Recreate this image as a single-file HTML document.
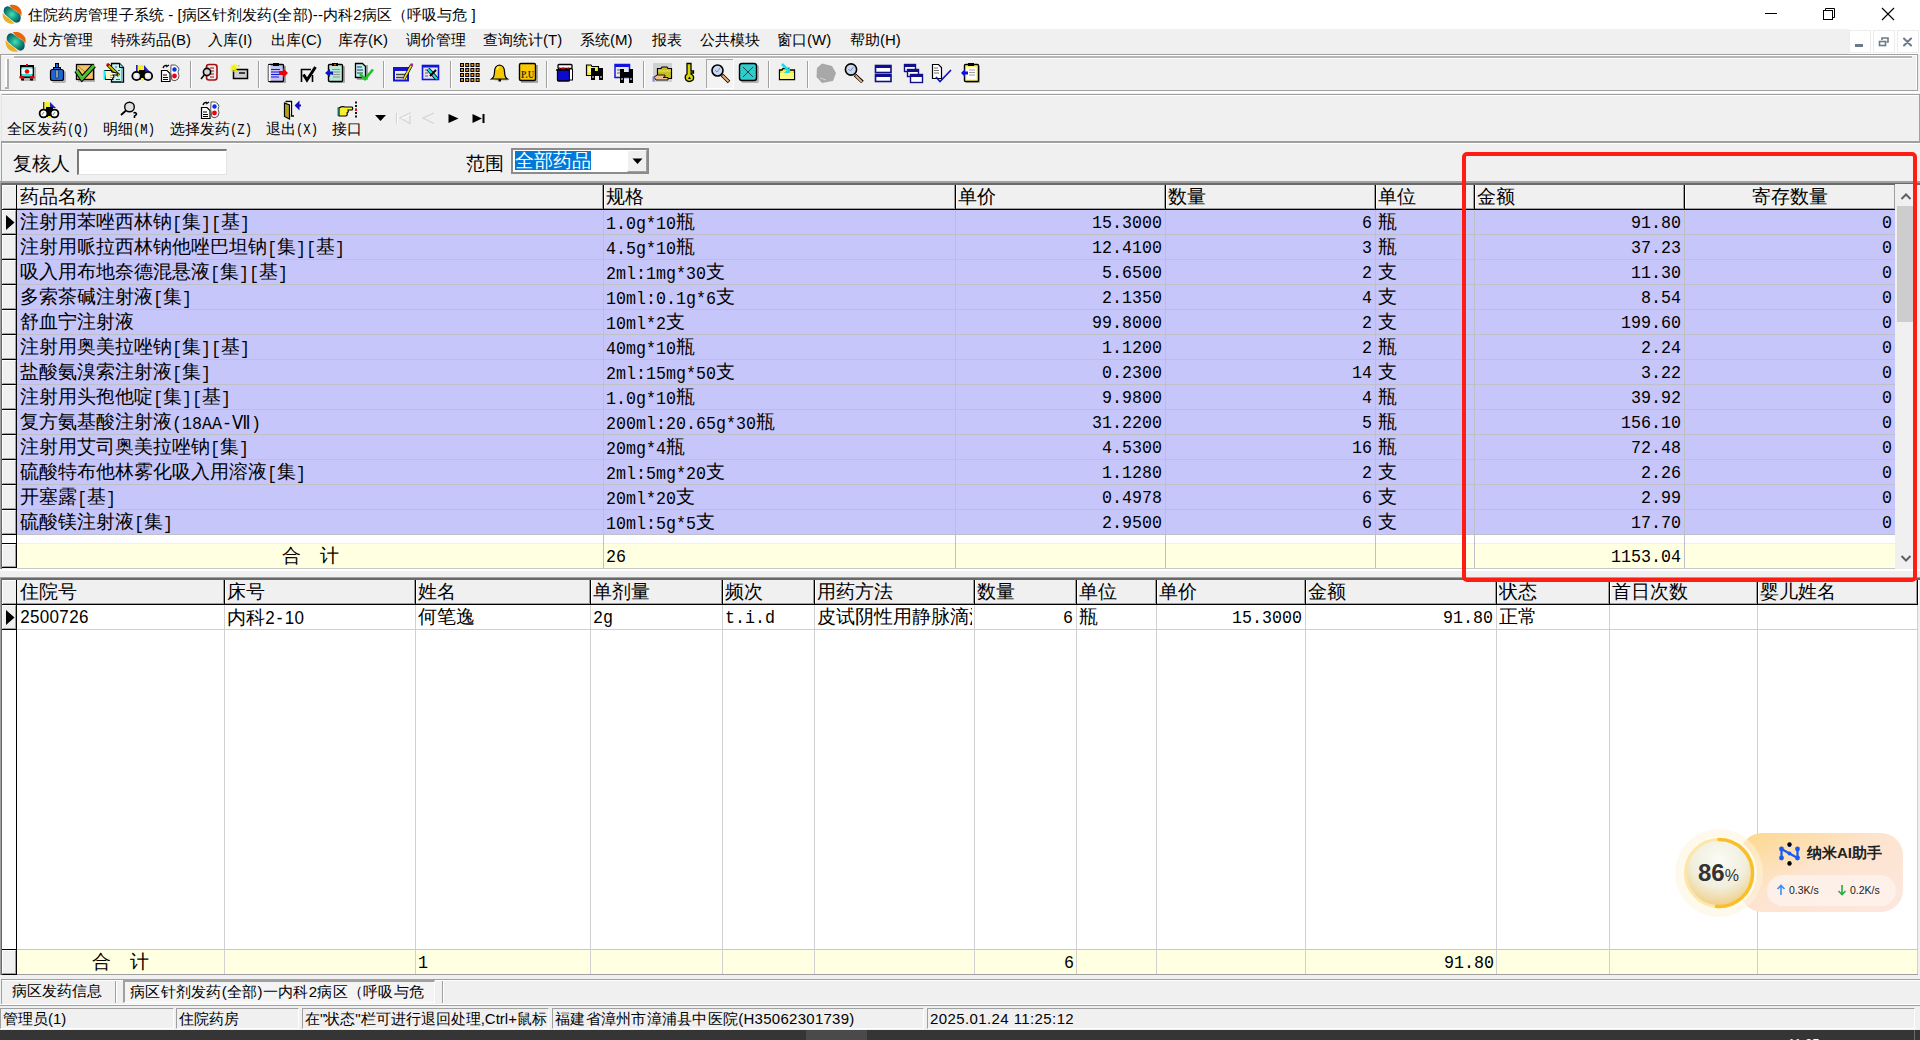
<!DOCTYPE html><html><head><meta charset="utf-8"><title>recreation</title><style>
*{margin:0;padding:0;box-sizing:border-box}
html,body{width:1920px;height:1040px;overflow:hidden;background:#f0f0f0;font-family:'Liberation Sans',sans-serif;color:#000}
.ab{position:absolute}
.c{font-size:18.67px}
.a{font-family:'Liberation Mono',monospace;font-size:16.67px;display:inline-block;transform:scaleY(1.15)}
.tb .c{font-size:14.67px}.tb .a{font-size:12.2px}
.ui{position:absolute;font-family:'Liberation Sans',sans-serif;font-size:15px;white-space:nowrap;line-height:20px}
.cell{position:absolute;white-space:nowrap;overflow:hidden;height:24px;line-height:24px}
.r{text-align:right}
.ind{position:absolute;left:2px;width:14px;background:#f0f0f0;border-top:1px solid #fff;border-left:1px solid #fff;border-right:1px solid #a0a0a0;border-bottom:1px solid #a0a0a0}
</style></head><body>
<div class="ab" style="left:0px;top:0px;width:1920px;height:29px;background:#fff;"></div>
<svg class="ab" style="left:2px;top:4px" width="20" height="20" viewBox="0 0 20 20">
<defs><radialGradient id="lg2" cx="48%" cy="50%" r="55%"><stop offset="0" stop-color="#42e2b4"/><stop offset="0.6" stop-color="#16907e"/><stop offset="1" stop-color="#085a62"/></radialGradient></defs>
<path d="M2 5 C3 2 6 1.5 8 3 C11 5 13 7 16 8.5 C19 10 19.5 14 18 17 C16 19.5 13 19 11 17 C8 15 6 13 3.5 11 C1.5 9 1.2 7 2 5Z" fill="url(#lg2)"/>
<path d="M7.5 1.2 C12 0 17 2 19 6 C19.8 8 19.8 10 19.3 12 C18 9.5 16 8 13 6.5 C11 5.5 9 3.5 7.5 1.2Z" fill="#ea6408"/>
<path d="M0.7 8.5 C2 11 4 12.5 7 14.5 C9 16 11 18 12.5 19.6 C8 20.5 3 18.5 1.2 14 C0.5 12 0.4 10 0.7 8.5Z" fill="#eeb020"/>
</svg>
<div class="ui" style="left:28px;top:5px;letter-spacing:0.1px">住院药房管理子系统 - [病区针剂发药(全部)--内科2病区（呼吸与危 ]</div>
<div class="ab" style="left:1765px;top:13px;width:12px;height:1px;background:#000;"></div>
<svg class="ab" style="left:1822px;top:7px" width="14" height="14" viewBox="0 0 14 14"><rect x="1.5" y="3.5" width="9" height="9" fill="none" stroke="#000"/><path d="M3.5 3.5 V1.5 H12.5 V10.5 H10.5" fill="none" stroke="#000"/></svg>
<svg class="ab" style="left:1881px;top:7px" width="14" height="14" viewBox="0 0 14 14"><path d="M1 1 L13 13 M13 1 L1 13" stroke="#000" stroke-width="1.1"/></svg>
<svg class="ab" style="left:5px;top:31px" width="21" height="21" viewBox="0 0 20 20">
<defs><radialGradient id="lg5" cx="48%" cy="50%" r="55%"><stop offset="0" stop-color="#42e2b4"/><stop offset="0.6" stop-color="#16907e"/><stop offset="1" stop-color="#085a62"/></radialGradient></defs>
<path d="M2 5 C3 2 6 1.5 8 3 C11 5 13 7 16 8.5 C19 10 19.5 14 18 17 C16 19.5 13 19 11 17 C8 15 6 13 3.5 11 C1.5 9 1.2 7 2 5Z" fill="url(#lg5)"/>
<path d="M7.5 1.2 C12 0 17 2 19 6 C19.8 8 19.8 10 19.3 12 C18 9.5 16 8 13 6.5 C11 5.5 9 3.5 7.5 1.2Z" fill="#ea6408"/>
<path d="M0.7 8.5 C2 11 4 12.5 7 14.5 C9 16 11 18 12.5 19.6 C8 20.5 3 18.5 1.2 14 C0.5 12 0.4 10 0.7 8.5Z" fill="#eeb020"/>
</svg>
<div class="ui" style="left:33px;top:30px">处方管理</div>
<div class="ui" style="left:111px;top:30px">特殊药品(B)</div>
<div class="ui" style="left:208px;top:30px">入库(I)</div>
<div class="ui" style="left:271px;top:30px">出库(C)</div>
<div class="ui" style="left:338px;top:30px">库存(K)</div>
<div class="ui" style="left:406px;top:30px">调价管理</div>
<div class="ui" style="left:483px;top:30px">查询统计(T)</div>
<div class="ui" style="left:580px;top:30px">系统(M)</div>
<div class="ui" style="left:652px;top:30px">报表</div>
<div class="ui" style="left:700px;top:30px">公共模块</div>
<div class="ui" style="left:777px;top:30px">窗口(W)</div>
<div class="ui" style="left:850px;top:30px">帮助(H)</div>
<div class="ab" style="left:1849px;top:29px;width:71px;height:25px;background:#fff;"></div>
<div class="ab" style="left:1849px;top:30px;width:22px;height:23px;background:#fff;border:1px solid #ececec"></div>
<div class="ab" style="left:1873px;top:30px;width:22px;height:23px;background:#fff;border:1px solid #ececec"></div>
<div class="ab" style="left:1897px;top:30px;width:22px;height:23px;background:#fff;border:1px solid #ececec"></div>
<div class="ab" style="left:1855px;top:44px;width:8px;height:3px;background:#6a7a88;"></div>
<svg class="ab" style="left:1877px;top:35px" width="14" height="14" viewBox="0 0 14 14"><rect x="2.5" y="6.5" width="6" height="4" fill="none" stroke="#6a7a88" stroke-width="1.6"/><path d="M5 5 V3 H11 V7 H9.5" fill="none" stroke="#6a7a88" stroke-width="1.6"/></svg>
<svg class="ab" style="left:1901px;top:35px" width="14" height="14" viewBox="0 0 14 14"><path d="M3 3.5 L10 10.5 M10 3.5 L3 10.5" stroke="#6a7a88" stroke-width="2" stroke-linecap="round"/></svg>
<div class="ab" style="left:0px;top:54px;width:1918px;height:1px;background:#a0a0a0;"></div>
<div class="ab" style="left:0px;top:54px;width:1px;height:38px;background:#a0a0a0;"></div>
<div class="ab" style="left:1px;top:55px;width:1916px;height:1px;background:#fff;"></div>
<div class="ab" style="left:14px;top:56px;width:1898px;height:2px;background:#b8b8b8;"></div>
<div class="ab" style="left:14px;top:58px;width:1898px;height:1px;background:#fff;"></div>
<div class="ab" style="left:5px;top:59px;width:2px;height:29px;background:#fff;"></div>
<div class="ab" style="left:7px;top:59px;width:2px;height:29px;background:#b0b0b0;"></div>
<div class="ab" style="left:5px;top:87px;width:4px;height:2px;background:#b0b0b0;"></div>
<div class="ab" style="left:0px;top:90px;width:1918px;height:1px;background:#a0a0a0;"></div>
<div class="ab" style="left:0px;top:91px;width:1920px;height:2px;background:#fff;"></div>
<div class="ab" style="left:1917px;top:54px;width:1px;height:37px;background:#a0a0a0;"></div>
<div class="ab" style="left:1916px;top:55px;width:1px;height:35px;background:#fff;"></div>
<div class="ab" style="left:1918px;top:54px;width:2px;height:38px;background:#f0f0f0;"></div>
<svg class="ab" style="left:0;top:0" width="1000" height="145" viewBox="0 0 1000 145"><rect x="190" y="61" width="1" height="27" fill="#a0a0a0"/><rect x="191" y="61" width="1" height="27" fill="#fff"/><rect x="258" y="61" width="1" height="27" fill="#a0a0a0"/><rect x="259" y="61" width="1" height="27" fill="#fff"/><rect x="383" y="61" width="1" height="27" fill="#a0a0a0"/><rect x="384" y="61" width="1" height="27" fill="#fff"/><rect x="450" y="61" width="1" height="27" fill="#a0a0a0"/><rect x="451" y="61" width="1" height="27" fill="#fff"/><rect x="546" y="61" width="1" height="27" fill="#a0a0a0"/><rect x="547" y="61" width="1" height="27" fill="#fff"/><rect x="643" y="61" width="1" height="27" fill="#a0a0a0"/><rect x="644" y="61" width="1" height="27" fill="#fff"/><rect x="768" y="61" width="1" height="27" fill="#a0a0a0"/><rect x="769" y="61" width="1" height="27" fill="#fff"/><rect x="807" y="61" width="1" height="27" fill="#a0a0a0"/><rect x="808" y="61" width="1" height="27" fill="#fff"/><rect x="22" y="67" width="14" height="14" rx="1" fill="#000" opacity="0.25"/>
<rect x="20" y="65" width="14" height="13" fill="#000"/>
<rect x="21.5" y="67" width="11" height="9.5" fill="#20e6e6"/>
<rect x="21.5" y="68.5" width="11" height="5.5" fill="#fff"/>
<circle cx="27" cy="71.5" r="2.3" fill="#f00"/>
<rect x="26" y="64" width="2" height="2" fill="#e00"/>
<rect x="19.5" y="76" width="5" height="2.5" fill="#d00"/><rect x="29.5" y="76" width="5" height="2.5" fill="#d00"/>
<rect x="21" y="78.5" width="3" height="2" fill="#000"/><rect x="30" y="78.5" width="3" height="2" fill="#000"/><rect x="52" y="71" width="14" height="12" rx="2" fill="#000" opacity="0.25"/>
<rect x="55" y="63" width="4" height="6" fill="#000"/><rect x="56" y="64" width="2" height="5" fill="#1e64d2"/>
<rect x="53" y="67" width="8" height="3" fill="#000"/><rect x="54" y="68" width="6" height="2" fill="#1e64d2"/>
<rect x="50.5" y="69.5" width="13" height="11" rx="2" fill="#1e64d2" stroke="#000" stroke-width="1.2"/>
<rect x="56" y="70" width="2" height="8" fill="#c8c8c8" stroke="#000" stroke-width="0.5"/><rect x="78" y="66" width="17" height="16" fill="#000" opacity="0.25"/>
<rect x="76.5" y="64.5" width="17" height="15" fill="#f6c462" stroke="#000" stroke-width="1.3"/>
<path d="M77 65 L85 72 L93 65" fill="none" stroke="#b08030" stroke-width="1"/>
<path d="M76.5 70.5 L82 78.5 L94 65.5" fill="none" stroke="#000" stroke-width="5"/>
<path d="M76.5 70.5 L82 78.5 L94 65.5" fill="none" stroke="#50c030" stroke-width="3"/><path d="M111.5 63.5 H119.5 L123.5 67.5 V82 H111.5Z" fill="#c4f4f4" stroke="#000" stroke-width="1.3"/>
<path d="M119.5 63.5 V67.5 H123.5" fill="#8cc8c8" stroke="#000" stroke-width="1"/>
<rect x="121" y="68" width="2" height="13.5" fill="#80b8b8"/>
<path d="M115 67h2M118 70.5h2M116 79.5h4" stroke="#406060" stroke-width="1.2"/>
<path d="M107.5 64.5 L119 75.5" stroke="#000" stroke-width="3.2"/><path d="M107.5 64.5 L119 75.5" stroke="#c8c000" stroke-width="1.8"/>
<rect x="106.5" y="63.5" width="2.5" height="2.5" fill="#c00"/>
<path d="M104.5 70.5 H110 Q112 70.5 112 72 L117 73 Q118 74.5 116.5 75 H113 L114 76.5 Q114 78 112.5 78 L113 79.5 H105.5 Q104.5 75 104.5 70.5Z" fill="#fff4c8" stroke="#000" stroke-width="1.1"/>
<path d="M110 75.5 H113M110 77.5 H112.5" stroke="#c09060" stroke-width="0.9"/>
<rect x="103.5" y="70.5" width="1.8" height="9" fill="#10f0f0"/><rect x="137.5" y="65" width="6.5" height="6.5" fill="#f8f030"/><rect x="136" y="65" width="1.6" height="6.5" fill="#2020b0"/>
<path d="M144 65 L149.5 71.5 H144Z" fill="#2020b0"/>
<rect x="139" y="70" width="6.5" height="9.5" fill="#000"/><rect x="141" y="78" width="3" height="2.5" fill="#f8f020"/>
<circle cx="136.5" cy="76" r="4.2" fill="#e8e8e8" stroke="#000" stroke-width="1.8"/>
<circle cx="148" cy="76" r="4.2" fill="#e8e8e8" stroke="#000" stroke-width="1.8"/>
<circle cx="136" cy="75.5" r="1.6" fill="#fff"/><circle cx="147.5" cy="75.5" r="1.6" fill="#fff"/><g transform="translate(161,64)">
<path d="M0.5 6.5 H6 L9 9.5 V17.5 H0.5Z" fill="#fff" stroke="#000" stroke-width="1.2"/>
<path d="M2 11h4M2 13.5h5M2 15.5h5" stroke="#000" stroke-width="1"/>
<path d="M2 4 Q3 1 6 1.5 M5 3 L8 1" fill="none" stroke="#000" stroke-width="1.3"/>
<path d="M10 1 Q15 0 17 3 Q19 5 17 8 Q19 12 17 15 Q14 18 11 16 Q9 9 10 1Z" fill="#fff" stroke="#555" stroke-width="1"/>
<circle cx="13.5" cy="5.5" r="2.2" fill="#0030f0"/><circle cx="13.5" cy="12" r="2.4" fill="#f00010"/>
</g><rect x="206.5" y="64.5" width="10.5" height="15.5" rx="2.5" fill="#f0e8e8" stroke="#a01010" stroke-width="1.6"/>
<path d="M210 68h4M210 71h4M210 74h4M210 77h4" stroke="#a01010" stroke-width="1"/>
<circle cx="207" cy="72" r="3.6" fill="#d8d8d8" stroke="#000" stroke-width="1.6"/>
<path d="M204.5 74.5 L201 79" stroke="#000" stroke-width="1.5"/><rect x="233.5" y="69.5" width="14" height="9" fill="#cfcfcf" stroke="#000" stroke-width="1.5"/>
<path d="M239 73h6" stroke="#000" stroke-width="1.4"/>
<path d="M234 64 V72 M230 68 H238 M231 65 L237 71 M237 65 L231 71" stroke="#f0f000" stroke-width="1.2"/>
<rect x="238" y="65" width="1.5" height="1.5" fill="#cc0"/><rect x="270" y="66" width="16" height="17" fill="#000" opacity="0.3"/>
<rect x="268.5" y="64.5" width="15" height="17" rx="1" fill="#c4c4f4" stroke="#000" stroke-width="1.4"/>
<rect x="268.5" y="65" width="2" height="16" fill="#fff"/>
<rect x="273" y="63" width="6" height="3" fill="#000"/>
<path d="M271 69.5h9M271 72h8M271 74.5h9M271 77h8" stroke="#1a1ad0" stroke-width="1.2"/>
<path d="M279 71 H283 V68 L288 73 L283 78 V75 H279Z" fill="#f00000"/><path d="M301.5 82 V69.5 H311" fill="none" stroke="#000" stroke-width="1.6"/>
<path d="M312.5 75 V82" stroke="#000" stroke-width="1.6"/>
<path d="M303.5 74.5 L307 80 L315.5 67" fill="none" stroke="#000" stroke-width="3"/><rect x="330" y="66" width="15" height="17" rx="1" fill="#000" opacity="0.3"/>
<rect x="328.5" y="64.5" width="14" height="17" rx="1" fill="#b8ead6" stroke="#000" stroke-width="1.4"/>
<rect x="332" y="63" width="6" height="3" fill="#000"/><rect x="334" y="64" width="2" height="1.5" fill="#d04010"/>
<path d="M332 69.5h8M333 72h7M332 74.5h8M333 77h7" stroke="#909090" stroke-width="1"/>
<path d="M333 71.5 H330 V69 L325 73 L330 77 V74.5 H333Z" fill="#1010d0"/><rect x="357" y="65" width="11" height="15" fill="#000" opacity="0.3"/>
<path d="M355.5 63.5 H362.5 L365.5 66.5 V77.5 H355.5Z" fill="#c4f0f8" stroke="#000" stroke-width="1.3"/>
<path d="M357 67h5M357 70h6M357 73h6" stroke="#204040" stroke-width="1"/>
<path d="M360 74 L365 79 L373 69.5" fill="none" stroke="#18c818" stroke-width="2.6"/><rect x="394" y="68" width="14" height="12.5" fill="#f0f0f0" stroke="#1414d0" stroke-width="2"/>
<rect x="394" y="68" width="14" height="3" fill="#1414d0"/>
<path d="M396 74.5h10M396 77.5h10" stroke="#404040" stroke-width="1.5"/>
<path d="M404 79 L411.5 65" stroke="#000" stroke-width="3"/><path d="M404 79 L411.5 65" stroke="#f0e020" stroke-width="1.6"/>
<rect x="410.5" y="63.5" width="2.5" height="2.5" fill="#c010c0"/><rect x="422.5" y="65.5" width="16" height="14" fill="#e4e4f0" stroke="#1414e0" stroke-width="1.6"/>
<rect x="423" y="66" width="15" height="1.5" fill="#1414e0"/>
<path d="M425 70h3M425 73h3M425 76h3" stroke="#606060" stroke-width="1"/>
<path d="M428 69 L437 79" stroke="#000" stroke-width="4"/><path d="M428 69 L437 79" stroke="#10e0e0" stroke-width="2.4"/>
<path d="M430 76 L436 70" stroke="#000" stroke-width="2"/><rect x="460.0" y="63" width="4" height="4" fill="#000"/><rect x="461.0" y="64" width="2" height="2" fill="#e08a10"/><rect x="465.2" y="63" width="4" height="4" fill="#000"/><rect x="466.2" y="64" width="2" height="2" fill="#e08a10"/><rect x="470.4" y="63" width="4" height="4" fill="#000"/><rect x="471.4" y="64" width="2" height="2" fill="#e08a10"/><rect x="475.6" y="63" width="4" height="4" fill="#000"/><rect x="476.6" y="64" width="2" height="2" fill="#e08a10"/><rect x="460.0" y="68" width="4" height="4" fill="#000"/><rect x="461.0" y="69" width="2" height="2" fill="#e08a10"/><rect x="465.2" y="68" width="4" height="4" fill="#000"/><rect x="466.2" y="69" width="2" height="2" fill="#e08a10"/><rect x="470.4" y="68" width="4" height="4" fill="#000"/><rect x="471.4" y="69" width="2" height="2" fill="#e08a10"/><rect x="475.6" y="68" width="4" height="4" fill="#000"/><rect x="476.6" y="69" width="2" height="2" fill="#e08a10"/><rect x="460.0" y="73" width="4" height="4" fill="#000"/><rect x="461.0" y="74" width="2" height="2" fill="#e08a10"/><rect x="465.2" y="73" width="4" height="4" fill="#000"/><rect x="466.2" y="74" width="2" height="2" fill="#e08a10"/><rect x="470.4" y="73" width="4" height="4" fill="#000"/><rect x="471.4" y="74" width="2" height="2" fill="#e08a10"/><rect x="475.6" y="73" width="4" height="4" fill="#000"/><rect x="476.6" y="74" width="2" height="2" fill="#e08a10"/><rect x="460.0" y="78" width="4" height="4" fill="#000"/><rect x="461.0" y="79" width="2" height="2" fill="#e08a10"/><rect x="465.2" y="78" width="4" height="4" fill="#000"/><rect x="466.2" y="79" width="2" height="2" fill="#e08a10"/><rect x="470.4" y="78" width="4" height="4" fill="#000"/><rect x="471.4" y="79" width="2" height="2" fill="#e08a10"/><rect x="475.6" y="78" width="4" height="4" fill="#000"/><rect x="476.6" y="79" width="2" height="2" fill="#e08a10"/><path d="M493 79 Q496 77 496 72 Q496 66 500 65.5 Q504 66 504 72 Q504 77 507 79Z" fill="#000" opacity="0.25" transform="translate(1.5,1.5)"/>
<path d="M491.5 79 Q494.5 77 494.5 72 Q494.5 65.5 499.5 65 Q504.5 65.5 504.5 72 Q504.5 77 507.5 79Z" fill="#f4c800" stroke="#000" stroke-width="1.2"/>
<path d="M497 70 Q497.5 67 499.5 67" stroke="#fff6a0" stroke-width="1.2" fill="none"/>
<rect x="498.5" y="79" width="2.5" height="2.5" fill="#000"/><rect x="521" y="65" width="17" height="18" fill="#000" opacity="0.3"/>
<rect x="519.5" y="63.5" width="16" height="17" rx="1.5" fill="#f8c800" stroke="#000" stroke-width="1.4"/>
<text x="521" y="77.5" font-family="Liberation Serif" font-size="11" font-weight="bold" fill="#403000" textLength="13" lengthAdjust="spacingAndGlyphs">P.U</text><rect x="558" y="64.5" width="14" height="4" rx="1" fill="#fff" stroke="#000" stroke-width="1.3"/>
<path d="M559 67 L561 69 L563 67 L566 69 L569 67 V70 H559Z" fill="#f01010"/>
<rect x="557.5" y="69.5" width="12" height="11.5" rx="1" fill="#0a0ad0" stroke="#000" stroke-width="1.3"/>
<path d="M556 70 H571" stroke="#000" stroke-width="1.4"/>
<rect x="569.5" y="69" width="3" height="11" fill="#fff" stroke="#000" stroke-width="1"/><path d="M586.5 65 H591 L592 66.5 H598.5 V75.5 H586.5Z" fill="#f0f040" stroke="#000" stroke-width="1.2"/>
<rect x="588" y="67" width="4" height="5" fill="#fff8a0"/>
<rect x="591" y="68" width="4" height="12" fill="#000"/><rect x="599" y="68" width="4" height="12" fill="#000"/>
<rect x="593" y="71" width="8" height="4" fill="#000"/>
<rect x="592" y="76" width="2" height="2" fill="#888"/><rect x="600" y="76" width="2" height="2" fill="#888"/><rect x="615" y="64.5" width="14.5" height="13" fill="#e8e8f0" stroke="#1414e0" stroke-width="1.5"/>
<rect x="615" y="64.5" width="14.5" height="2.5" fill="#1414e0"/>
<path d="M617 70h3M621 70h3M617 73h3" stroke="#606060" stroke-width="1"/>
<rect x="620" y="69" width="4" height="14" fill="#000"/><rect x="629" y="69" width="4" height="14" fill="#000"/>
<rect x="622" y="72" width="9" height="5" fill="#000"/>
<rect x="621" y="78" width="2" height="2" fill="#888"/><rect x="630" y="78" width="2" height="2" fill="#888"/><rect x="653" y="63" width="19" height="19" fill="#d0d0d0"/>
<path d="M657.5 68.5 H661 L662 67 H667 L668 68.5 H671.5 V78.5 H657.5Z" fill="#c8c020" stroke="#000" stroke-width="1.2"/>
<path d="M658 71 H671" stroke="#e8e070" stroke-width="1"/>
<path d="M654 77 Q657 74 661 75 H665 Q666 77 663 77.5 H668 V80 H656Z" fill="#f0c090" stroke="#000" stroke-width="0.9"/>
<rect x="652.5" y="76.5" width="2" height="5" fill="#8080d0"/><path d="M687 63.5 H691 V71 H693.5 V73 H691 V74 Q695 76 693 80 Q689 83 686 80 Q684 76 687 74Z" fill="#d8d800" stroke="#000" stroke-width="1.3"/>
<path d="M689.5 76.5 L688 79 H691Z" fill="#000"/><rect x="706" y="59" width="28" height="30" fill="#f3f3f3"/>
<rect x="706" y="59" width="28" height="1" fill="#a8a8a8"/><rect x="706" y="59" width="1" height="30" fill="#a8a8a8"/>
<rect x="733" y="59" width="1" height="30" fill="#fff"/><rect x="706" y="88" width="28" height="1" fill="#fff"/>
<path d="M722 75 L729 82" stroke="#000" stroke-width="3.6"/><path d="M722.5 75.5 L728.5 81.5" stroke="#f0b070" stroke-width="1.8"/>
<circle cx="717.5" cy="70.5" r="5.5" fill="#c8d8f0" stroke="#000" stroke-width="1.6"/>
<path d="M715 70 L717 72 L720 68" fill="none" stroke="#7890b0" stroke-width="1"/><rect x="741" y="65" width="18" height="18" rx="2" fill="#000" opacity="0.25"/>
<rect x="739.5" y="63.5" width="17" height="17" rx="2.5" fill="#30cccc" stroke="#000" stroke-width="1.4"/>
<path d="M743 67 L753 77 M753 67 L743 77" stroke="#204848" stroke-width="1"/><path d="M779.5 70 H782 L783 68.5 H789 V70 H794.5 V79.5 H779.5Z" fill="#f6f040" stroke="#000" stroke-width="1.3"/>
<rect x="780" y="73" width="14" height="6" fill="#f8f880"/>
<path d="M782 64 L789 71" stroke="#10e0f0" stroke-width="2.5"/><path d="M790 67 V73 H784Z" fill="#10e0f0"/><path d="M822 63.5 L832 66 L836 73 L833 81 L822 83 L816.5 77 L817 68Z" fill="#a8a8a8"/>
<path d="M820 78 L826 80" stroke="#d0d0d0" stroke-width="1"/><path d="M855 75 L862.5 82" stroke="#000" stroke-width="3.6"/><path d="M855.5 75.5 L862 82" stroke="#f0b070" stroke-width="1.8"/>
<circle cx="851" cy="69.5" r="5.6" fill="#c8d8f0" stroke="#000" stroke-width="1.6"/>
<path d="M848.5 69 L850.5 71 L853.5 67" fill="none" stroke="#7890b0" stroke-width="1"/><rect x="875.5" y="65.5" width="15.5" height="7" fill="#fff" stroke="#10108a" stroke-width="1.6"/><rect x="875.5" y="65.5" width="15.5" height="2.5" fill="#10108a"/>
<rect x="875.5" y="74.5" width="15.5" height="7" fill="#fff" stroke="#10108a" stroke-width="1.6"/><rect x="875.5" y="74.5" width="15.5" height="2.5" fill="#10108a"/><rect x="904.5" y="64.5" width="11" height="7" fill="#fff" stroke="#10108a" stroke-width="1.4"/><rect x="904.5" y="64.5" width="11" height="2.5" fill="#10108a"/>
<rect x="907.5" y="69.5" width="11" height="7" fill="#fff" stroke="#10108a" stroke-width="1.4"/><rect x="907.5" y="69.5" width="11" height="2.5" fill="#10108a"/>
<rect x="910.5" y="74.5" width="12" height="8" fill="#fff" stroke="#10108a" stroke-width="1.4"/><rect x="910.5" y="74.5" width="12" height="2.5" fill="#10108a"/><path d="M932.5 64.5 H938.5 L941.5 67.5 V78.5 H932.5Z" fill="#fff" stroke="#000" stroke-width="1.2"/>
<path d="M934 68h4M934 70.5h5M934 73h5" stroke="#707070" stroke-width="1"/>
<path d="M936 77 L940 81.5 L951 70" fill="none" stroke="#1010c0" stroke-width="1.6"/><rect x="966" y="66" width="14" height="17" fill="#000" opacity="0.25"/>
<rect x="964.5" y="64.5" width="14" height="17" rx="1" fill="#f8f060" stroke="#000" stroke-width="1.4"/>
<rect x="966.5" y="67" width="10" height="12.5" fill="#fff"/>
<rect x="968" y="63" width="6" height="3" fill="#000"/>
<path d="M969 70h6M969 72.5h6M969 75h6" stroke="#a0a0a0" stroke-width="1"/>
<path d="M968 71.5 H965 V69 L961 73 L965 77 V74.5 H968Z" fill="#1010e0"/><rect x="44" y="102" width="6" height="7" fill="#f8f020"/><rect x="43" y="102" width="1.3" height="7" fill="#2020c0"/>
<path d="M50 102 L56 108 H50Z" fill="#2020c0"/>
<rect x="46" y="107" width="7" height="10" fill="#000"/><rect x="48" y="116" width="3" height="2" fill="#f8f020"/>
<circle cx="43.5" cy="113.5" r="3.9" fill="#fff" stroke="#000" stroke-width="1.8"/>
<circle cx="54.5" cy="113.5" r="3.9" fill="#fff" stroke="#000" stroke-width="1.8"/>
<path d="M42 115 L44 112M53 115 L55 112" stroke="#888" stroke-width="1"/><circle cx="129.5" cy="107" r="4.8" fill="#e0e0e0" stroke="#000" stroke-width="1.4"/>
<path d="M126 110.5 L121 115" stroke="#000" stroke-width="1.8"/>
<path d="M133.5 113 Q136 112 136.5 114 Q136 115.5 134.5 116 V118" fill="none" stroke="#000" stroke-width="1.6"/><g transform="translate(201,101)">
<path d="M0.5 6.5 H6 L9 9.5 V17.5 H0.5Z" fill="#fff" stroke="#000" stroke-width="1.2"/>
<path d="M2 11h4M2 13.5h5M2 15.5h5" stroke="#000" stroke-width="1"/>
<path d="M2 4 Q3 1 6 1.5 M5 3 L8 1" fill="none" stroke="#000" stroke-width="1.3"/>
<path d="M10 1 Q15 0 17 3 Q19 5 17 8 Q19 12 17 15 Q14 18 11 16 Q9 9 10 1Z" fill="#fff" stroke="#555" stroke-width="1"/>
<circle cx="13.5" cy="5.5" r="2.2" fill="#0030f0"/><circle cx="13.5" cy="12" r="2.4" fill="#f00010"/>
</g><path d="M285.5 101.5 H291.5 V116 H294 " fill="none" stroke="#000" stroke-width="1.3"/>
<rect x="287" y="102.5" width="4" height="12" fill="#fff"/>
<path d="M284.5 103 L289.5 105 V119 L284.5 116.5Z" fill="#b0a020" stroke="#000" stroke-width="1.2"/>
<path d="M296 105.5 H301 M296 105.5 L298.5 103 V108Z" stroke="#1010c0" stroke-width="2" fill="#1010c0"/><rect x="337" y="107" width="1.8" height="9" fill="#20e0e8"/>
<path d="M339 108 Q342 106 345 107 H352 Q353.5 108.5 352 110 H348 Q349 112 347 113 Q348 115 346 116 H339Z" fill="#f6f030" stroke="#000" stroke-width="1.1"/>
<path d="M356 101.5 V119" stroke="#000" stroke-width="1.8" stroke-dasharray="2,1.5"/>
<rect x="355" y="109" width="2" height="2" fill="#f00"/><path d="M375 115 H386 L380.5 121Z" fill="#000"/>
<path d="M396.5 113 V123.5 M410 113 L400 118 L410 123.5Z" fill="none" stroke="#d4d4d4" stroke-width="1.2"/>
<path d="M397.5 114 V124 M411 114 L401 119" fill="none" stroke="#fff" stroke-width="0.8"/>
<path d="M434 113 L423 118 L434 123.5" fill="none" stroke="#d4d4d4" stroke-width="1.2"/>
<path d="M448.5 114 L458.5 118.5 L448.5 123Z" fill="#000"/>
<path d="M472.5 114 L482 118.5 L472.5 123Z" fill="#000"/><rect x="482.5" y="114" width="2" height="9" fill="#000"/></svg>
<div class="ab" style="left:1px;top:94px;width:1919px;height:1px;background:#a0a0a0;"></div>
<div class="ab" style="left:1px;top:94px;width:1px;height:47px;background:#e4e4e4;"></div>
<div class="ab" style="left:2px;top:95px;width:1918px;height:1px;background:#fff;"></div>
<div class="ab" style="left:1px;top:141px;width:1919px;height:1px;background:#a0a0a0;"></div>
<div class="ab" style="left:1919px;top:94px;width:1px;height:48px;background:#a0a0a0;"></div>
<div class="ab tb" style="left:7px;top:119px;line-height:20px;white-space:nowrap"><span class="c">全区发药</span><span class="a">(Q)</span></div>
<div class="ab tb" style="left:103px;top:119px;line-height:20px;white-space:nowrap"><span class="c">明细</span><span class="a">(M)</span></div>
<div class="ab tb" style="left:170px;top:119px;line-height:20px;white-space:nowrap"><span class="c">选择发药</span><span class="a">(Z)</span></div>
<div class="ab tb" style="left:266px;top:119px;line-height:20px;white-space:nowrap"><span class="c">退出</span><span class="a">(X)</span></div>
<div class="ab tb" style="left:332px;top:119px;line-height:20px;white-space:nowrap"><span class="c">接口</span></div>

<div class="ab" style="left:1px;top:142px;width:1919px;height:1px;background:#a0a0a0;"></div>
<div class="ab" style="left:1px;top:142px;width:1px;height:39px;background:#a0a0a0;"></div>
<div class="ab" style="left:2px;top:143px;width:1918px;height:1px;background:#fff;"></div>
<div class="ab" style="left:13px;top:153px;line-height:22px;white-space:nowrap"><span class="c">复核人</span></div>
<div class="ab" style="left:77px;top:149px;width:150px;height:26px;background:#fff;border-top:2px solid #7a7a7a;border-left:2px solid #7a7a7a;border-right:1px solid #e4e4e4;border-bottom:1px solid #e4e4e4"></div>
<div class="ab" style="left:466px;top:153px;line-height:22px;white-space:nowrap"><span class="c">范围</span></div>
<div class="ab" style="left:511px;top:148px;width:138px;height:26px;background:#fff;border:2px solid #8c8c8c"></div>
<div class="ab" style="left:515px;top:151px;width:76px;height:19px;background:#0078d7;"></div>
<div class="ab" style="left:515px;top:150px;line-height:21px;white-space:nowrap;color:#fff"><span class="c">全部药品</span></div>
<div class="ab" style="left:627px;top:150px;width:20px;height:22px;background:#f0f0f0;border-left:1px solid #fff;border-top:1px solid #fff;border-right:1px solid #a0a0a0;border-bottom:1px solid #a0a0a0"></div>
<svg class="ab" style="left:632px;top:158px" width="11" height="7" viewBox="0 0 11 7"><path d="M0.5 0.5 H10.5 L5.5 6Z" fill="#000"/></svg>
<div class="ab" style="left:0px;top:181px;width:1920px;height:2px;background:#a0a0a0;"></div>
<div class="ab" style="left:1px;top:183px;width:1919px;height:2px;background:#696969;"></div>
<div class="ab" style="left:0px;top:181px;width:1px;height:388px;background:#a0a0a0;"></div>
<div class="ab" style="left:1px;top:183px;width:1px;height:386px;background:#696969;"></div>
<div class="ab" style="left:0px;top:569px;width:1920px;height:2px;background:#fff;"></div>
<div class="ab" style="left:2px;top:185px;width:1893px;height:24px;background:#f0f0f0;"></div>
<div class="ab" style="left:2px;top:208px;width:1893px;height:1px;background:#a0a0a0;"></div>
<div class="ab" style="left:2px;top:209px;width:1893px;height:1px;background:#000;"></div>
<div class="ab" style="left:2px;top:185px;width:1px;height:24px;background:#fff;"></div>
<div class="ab" style="left:2px;top:185px;width:14px;height:1px;background:#fff;"></div>
<div class="ab" style="left:16px;top:185px;width:1px;height:24px;background:#000;"></div>
<div class="ab" style="left:602px;top:185px;width:1px;height:24px;background:#a0a0a0;"></div>
<div class="ab" style="left:603px;top:185px;width:1px;height:24px;background:#000;"></div>
<div class="ab" style="left:604px;top:185px;width:1px;height:23px;background:#fff;"></div>
<div class="cell" style="left:20px;top:185px;width:582px"><span class="c">药品名称</span></div>
<div class="ab" style="left:954px;top:185px;width:1px;height:24px;background:#a0a0a0;"></div>
<div class="ab" style="left:955px;top:185px;width:1px;height:24px;background:#000;"></div>
<div class="ab" style="left:956px;top:185px;width:1px;height:23px;background:#fff;"></div>
<div class="cell" style="left:606px;top:185px;width:348px"><span class="c">规格</span></div>
<div class="ab" style="left:1164px;top:185px;width:1px;height:24px;background:#a0a0a0;"></div>
<div class="ab" style="left:1165px;top:185px;width:1px;height:24px;background:#000;"></div>
<div class="ab" style="left:1166px;top:185px;width:1px;height:23px;background:#fff;"></div>
<div class="cell" style="left:958px;top:185px;width:206px"><span class="c">单价</span></div>
<div class="ab" style="left:1374px;top:185px;width:1px;height:24px;background:#a0a0a0;"></div>
<div class="ab" style="left:1375px;top:185px;width:1px;height:24px;background:#000;"></div>
<div class="ab" style="left:1376px;top:185px;width:1px;height:23px;background:#fff;"></div>
<div class="cell" style="left:1168px;top:185px;width:206px"><span class="c">数量</span></div>
<div class="ab" style="left:1473px;top:185px;width:1px;height:24px;background:#a0a0a0;"></div>
<div class="ab" style="left:1474px;top:185px;width:1px;height:24px;background:#000;"></div>
<div class="ab" style="left:1475px;top:185px;width:1px;height:23px;background:#fff;"></div>
<div class="cell" style="left:1378px;top:185px;width:95px"><span class="c">单位</span></div>
<div class="ab" style="left:1683px;top:185px;width:1px;height:24px;background:#a0a0a0;"></div>
<div class="ab" style="left:1684px;top:185px;width:1px;height:24px;background:#000;"></div>
<div class="ab" style="left:1685px;top:185px;width:1px;height:23px;background:#fff;"></div>
<div class="cell" style="left:1477px;top:185px;width:206px"><span class="c">金额</span></div>
<div class="ab" style="left:1894px;top:185px;width:1px;height:24px;background:#a0a0a0;"></div>
<div class="ab" style="left:1895px;top:185px;width:1px;height:24px;background:#000;"></div>
<div class="ab" style="left:1896px;top:185px;width:1px;height:23px;background:#fff;"></div>
<div class="cell" style="left:1684px;top:185px;width:211px;text-align:center"><span class="c">寄存数量</span></div>
<div class="ab" style="left:17px;top:210px;width:1878px;height:325px;background:#c6c6fa;"></div>
<div class="ab" style="left:17px;top:535px;width:1878px;height:8px;background:#fff;"></div>
<div class="ab" style="left:17px;top:544px;width:1878px;height:24px;background:#ffffe1;"></div>
<div class="ab" style="left:17px;top:568px;width:1878px;height:1px;background:#c8c8c8;"></div>
<div class="ab" style="left:17px;top:234px;width:1878px;height:1px;background:#c0c0c8;"></div>
<div class="ind" style="top:210px;height:24px"></div>
<div class="ab" style="left:2px;top:234px;width:15px;height:1px;background:#000;"></div>
<div class="cell" style="left:20px;top:210px;width:582px"><span class="c">注射用苯唑西林钠</span><span class="a">[</span><span class="c">集</span><span class="a">][</span><span class="c">基</span><span class="a">]</span></div>
<div class="cell" style="left:606px;top:210px;width:348px"><span class="a">1.0g*10</span><span class="c">瓶</span></div>
<div class="cell r" style="left:955px;top:210px;width:207px"><span class="a">15.3000</span></div>
<div class="cell r" style="left:1165px;top:210px;width:207px"><span class="a">6</span></div>
<div class="cell" style="left:1378px;top:210px;width:95px"><span class="c">瓶</span></div>
<div class="cell r" style="left:1474px;top:210px;width:207px"><span class="a">91.80</span></div>
<div class="cell r" style="left:1684px;top:210px;width:208px"><span class="a">0</span></div>
<div class="ab" style="left:17px;top:259px;width:1878px;height:1px;background:#c0c0c8;"></div>
<div class="ind" style="top:235px;height:24px"></div>
<div class="ab" style="left:2px;top:259px;width:15px;height:1px;background:#000;"></div>
<div class="cell" style="left:20px;top:235px;width:582px"><span class="c">注射用哌拉西林钠他唑巴坦钠</span><span class="a">[</span><span class="c">集</span><span class="a">][</span><span class="c">基</span><span class="a">]</span></div>
<div class="cell" style="left:606px;top:235px;width:348px"><span class="a">4.5g*10</span><span class="c">瓶</span></div>
<div class="cell r" style="left:955px;top:235px;width:207px"><span class="a">12.4100</span></div>
<div class="cell r" style="left:1165px;top:235px;width:207px"><span class="a">3</span></div>
<div class="cell" style="left:1378px;top:235px;width:95px"><span class="c">瓶</span></div>
<div class="cell r" style="left:1474px;top:235px;width:207px"><span class="a">37.23</span></div>
<div class="cell r" style="left:1684px;top:235px;width:208px"><span class="a">0</span></div>
<div class="ab" style="left:17px;top:284px;width:1878px;height:1px;background:#c0c0c8;"></div>
<div class="ind" style="top:260px;height:24px"></div>
<div class="ab" style="left:2px;top:284px;width:15px;height:1px;background:#000;"></div>
<div class="cell" style="left:20px;top:260px;width:582px"><span class="c">吸入用布地奈德混悬液</span><span class="a">[</span><span class="c">集</span><span class="a">][</span><span class="c">基</span><span class="a">]</span></div>
<div class="cell" style="left:606px;top:260px;width:348px"><span class="a">2ml:1mg*30</span><span class="c">支</span></div>
<div class="cell r" style="left:955px;top:260px;width:207px"><span class="a">5.6500</span></div>
<div class="cell r" style="left:1165px;top:260px;width:207px"><span class="a">2</span></div>
<div class="cell" style="left:1378px;top:260px;width:95px"><span class="c">支</span></div>
<div class="cell r" style="left:1474px;top:260px;width:207px"><span class="a">11.30</span></div>
<div class="cell r" style="left:1684px;top:260px;width:208px"><span class="a">0</span></div>
<div class="ab" style="left:17px;top:309px;width:1878px;height:1px;background:#c0c0c8;"></div>
<div class="ind" style="top:285px;height:24px"></div>
<div class="ab" style="left:2px;top:309px;width:15px;height:1px;background:#000;"></div>
<div class="cell" style="left:20px;top:285px;width:582px"><span class="c">多索茶碱注射液</span><span class="a">[</span><span class="c">集</span><span class="a">]</span></div>
<div class="cell" style="left:606px;top:285px;width:348px"><span class="a">10ml:0.1g*6</span><span class="c">支</span></div>
<div class="cell r" style="left:955px;top:285px;width:207px"><span class="a">2.1350</span></div>
<div class="cell r" style="left:1165px;top:285px;width:207px"><span class="a">4</span></div>
<div class="cell" style="left:1378px;top:285px;width:95px"><span class="c">支</span></div>
<div class="cell r" style="left:1474px;top:285px;width:207px"><span class="a">8.54</span></div>
<div class="cell r" style="left:1684px;top:285px;width:208px"><span class="a">0</span></div>
<div class="ab" style="left:17px;top:334px;width:1878px;height:1px;background:#c0c0c8;"></div>
<div class="ind" style="top:310px;height:24px"></div>
<div class="ab" style="left:2px;top:334px;width:15px;height:1px;background:#000;"></div>
<div class="cell" style="left:20px;top:310px;width:582px"><span class="c">舒血宁注射液</span></div>
<div class="cell" style="left:606px;top:310px;width:348px"><span class="a">10ml*2</span><span class="c">支</span></div>
<div class="cell r" style="left:955px;top:310px;width:207px"><span class="a">99.8000</span></div>
<div class="cell r" style="left:1165px;top:310px;width:207px"><span class="a">2</span></div>
<div class="cell" style="left:1378px;top:310px;width:95px"><span class="c">支</span></div>
<div class="cell r" style="left:1474px;top:310px;width:207px"><span class="a">199.60</span></div>
<div class="cell r" style="left:1684px;top:310px;width:208px"><span class="a">0</span></div>
<div class="ab" style="left:17px;top:359px;width:1878px;height:1px;background:#c0c0c8;"></div>
<div class="ind" style="top:335px;height:24px"></div>
<div class="ab" style="left:2px;top:359px;width:15px;height:1px;background:#000;"></div>
<div class="cell" style="left:20px;top:335px;width:582px"><span class="c">注射用奥美拉唑钠</span><span class="a">[</span><span class="c">集</span><span class="a">][</span><span class="c">基</span><span class="a">]</span></div>
<div class="cell" style="left:606px;top:335px;width:348px"><span class="a">40mg*10</span><span class="c">瓶</span></div>
<div class="cell r" style="left:955px;top:335px;width:207px"><span class="a">1.1200</span></div>
<div class="cell r" style="left:1165px;top:335px;width:207px"><span class="a">2</span></div>
<div class="cell" style="left:1378px;top:335px;width:95px"><span class="c">瓶</span></div>
<div class="cell r" style="left:1474px;top:335px;width:207px"><span class="a">2.24</span></div>
<div class="cell r" style="left:1684px;top:335px;width:208px"><span class="a">0</span></div>
<div class="ab" style="left:17px;top:384px;width:1878px;height:1px;background:#c0c0c8;"></div>
<div class="ind" style="top:360px;height:24px"></div>
<div class="ab" style="left:2px;top:384px;width:15px;height:1px;background:#000;"></div>
<div class="cell" style="left:20px;top:360px;width:582px"><span class="c">盐酸氨溴索注射液</span><span class="a">[</span><span class="c">集</span><span class="a">]</span></div>
<div class="cell" style="left:606px;top:360px;width:348px"><span class="a">2ml:15mg*50</span><span class="c">支</span></div>
<div class="cell r" style="left:955px;top:360px;width:207px"><span class="a">0.2300</span></div>
<div class="cell r" style="left:1165px;top:360px;width:207px"><span class="a">14</span></div>
<div class="cell" style="left:1378px;top:360px;width:95px"><span class="c">支</span></div>
<div class="cell r" style="left:1474px;top:360px;width:207px"><span class="a">3.22</span></div>
<div class="cell r" style="left:1684px;top:360px;width:208px"><span class="a">0</span></div>
<div class="ab" style="left:17px;top:409px;width:1878px;height:1px;background:#c0c0c8;"></div>
<div class="ind" style="top:385px;height:24px"></div>
<div class="ab" style="left:2px;top:409px;width:15px;height:1px;background:#000;"></div>
<div class="cell" style="left:20px;top:385px;width:582px"><span class="c">注射用头孢他啶</span><span class="a">[</span><span class="c">集</span><span class="a">][</span><span class="c">基</span><span class="a">]</span></div>
<div class="cell" style="left:606px;top:385px;width:348px"><span class="a">1.0g*10</span><span class="c">瓶</span></div>
<div class="cell r" style="left:955px;top:385px;width:207px"><span class="a">9.9800</span></div>
<div class="cell r" style="left:1165px;top:385px;width:207px"><span class="a">4</span></div>
<div class="cell" style="left:1378px;top:385px;width:95px"><span class="c">瓶</span></div>
<div class="cell r" style="left:1474px;top:385px;width:207px"><span class="a">39.92</span></div>
<div class="cell r" style="left:1684px;top:385px;width:208px"><span class="a">0</span></div>
<div class="ab" style="left:17px;top:434px;width:1878px;height:1px;background:#c0c0c8;"></div>
<div class="ind" style="top:410px;height:24px"></div>
<div class="ab" style="left:2px;top:434px;width:15px;height:1px;background:#000;"></div>
<div class="cell" style="left:20px;top:410px;width:582px"><span class="c">复方氨基酸注射液</span><span class="a">(18AA-Ⅶ)</span></div>
<div class="cell" style="left:606px;top:410px;width:348px"><span class="a">200ml:20.65g*30</span><span class="c">瓶</span></div>
<div class="cell r" style="left:955px;top:410px;width:207px"><span class="a">31.2200</span></div>
<div class="cell r" style="left:1165px;top:410px;width:207px"><span class="a">5</span></div>
<div class="cell" style="left:1378px;top:410px;width:95px"><span class="c">瓶</span></div>
<div class="cell r" style="left:1474px;top:410px;width:207px"><span class="a">156.10</span></div>
<div class="cell r" style="left:1684px;top:410px;width:208px"><span class="a">0</span></div>
<div class="ab" style="left:17px;top:459px;width:1878px;height:1px;background:#c0c0c8;"></div>
<div class="ind" style="top:435px;height:24px"></div>
<div class="ab" style="left:2px;top:459px;width:15px;height:1px;background:#000;"></div>
<div class="cell" style="left:20px;top:435px;width:582px"><span class="c">注射用艾司奥美拉唑钠</span><span class="a">[</span><span class="c">集</span><span class="a">]</span></div>
<div class="cell" style="left:606px;top:435px;width:348px"><span class="a">20mg*4</span><span class="c">瓶</span></div>
<div class="cell r" style="left:955px;top:435px;width:207px"><span class="a">4.5300</span></div>
<div class="cell r" style="left:1165px;top:435px;width:207px"><span class="a">16</span></div>
<div class="cell" style="left:1378px;top:435px;width:95px"><span class="c">瓶</span></div>
<div class="cell r" style="left:1474px;top:435px;width:207px"><span class="a">72.48</span></div>
<div class="cell r" style="left:1684px;top:435px;width:208px"><span class="a">0</span></div>
<div class="ab" style="left:17px;top:484px;width:1878px;height:1px;background:#c0c0c8;"></div>
<div class="ind" style="top:460px;height:24px"></div>
<div class="ab" style="left:2px;top:484px;width:15px;height:1px;background:#000;"></div>
<div class="cell" style="left:20px;top:460px;width:582px"><span class="c">硫酸特布他林雾化吸入用溶液</span><span class="a">[</span><span class="c">集</span><span class="a">]</span></div>
<div class="cell" style="left:606px;top:460px;width:348px"><span class="a">2ml:5mg*20</span><span class="c">支</span></div>
<div class="cell r" style="left:955px;top:460px;width:207px"><span class="a">1.1280</span></div>
<div class="cell r" style="left:1165px;top:460px;width:207px"><span class="a">2</span></div>
<div class="cell" style="left:1378px;top:460px;width:95px"><span class="c">支</span></div>
<div class="cell r" style="left:1474px;top:460px;width:207px"><span class="a">2.26</span></div>
<div class="cell r" style="left:1684px;top:460px;width:208px"><span class="a">0</span></div>
<div class="ab" style="left:17px;top:509px;width:1878px;height:1px;background:#c0c0c8;"></div>
<div class="ind" style="top:485px;height:24px"></div>
<div class="ab" style="left:2px;top:509px;width:15px;height:1px;background:#000;"></div>
<div class="cell" style="left:20px;top:485px;width:582px"><span class="c">开塞露</span><span class="a">[</span><span class="c">基</span><span class="a">]</span></div>
<div class="cell" style="left:606px;top:485px;width:348px"><span class="a">20ml*20</span><span class="c">支</span></div>
<div class="cell r" style="left:955px;top:485px;width:207px"><span class="a">0.4978</span></div>
<div class="cell r" style="left:1165px;top:485px;width:207px"><span class="a">6</span></div>
<div class="cell" style="left:1378px;top:485px;width:95px"><span class="c">支</span></div>
<div class="cell r" style="left:1474px;top:485px;width:207px"><span class="a">2.99</span></div>
<div class="cell r" style="left:1684px;top:485px;width:208px"><span class="a">0</span></div>
<div class="ab" style="left:17px;top:534px;width:1878px;height:1px;background:#c0c0c8;"></div>
<div class="ind" style="top:510px;height:24px"></div>
<div class="ab" style="left:2px;top:534px;width:15px;height:1px;background:#000;"></div>
<div class="cell" style="left:20px;top:510px;width:582px"><span class="c">硫酸镁注射液</span><span class="a">[</span><span class="c">集</span><span class="a">]</span></div>
<div class="cell" style="left:606px;top:510px;width:348px"><span class="a">10ml:5g*5</span><span class="c">支</span></div>
<div class="cell r" style="left:955px;top:510px;width:207px"><span class="a">2.9500</span></div>
<div class="cell r" style="left:1165px;top:510px;width:207px"><span class="a">6</span></div>
<div class="cell" style="left:1378px;top:510px;width:95px"><span class="c">支</span></div>
<div class="cell r" style="left:1474px;top:510px;width:207px"><span class="a">17.70</span></div>
<div class="cell r" style="left:1684px;top:510px;width:208px"><span class="a">0</span></div>
<div class="ab" style="left:2px;top:535px;width:14px;height:8px;background:#fff;"></div>
<div class="ab" style="left:2px;top:543px;width:15px;height:1px;background:#000;"></div>
<div class="ind" style="top:544px;height:23px"></div>
<div class="ab" style="left:2px;top:567px;width:15px;height:1px;background:#000;"></div>
<div class="ab" style="left:16px;top:210px;width:1px;height:358px;background:#000;"></div>
<div class="ab" style="left:603px;top:210px;width:1px;height:358px;background:#c0c0c8;"></div>
<div class="ab" style="left:955px;top:210px;width:1px;height:358px;background:#c0c0c8;"></div>
<div class="ab" style="left:1165px;top:210px;width:1px;height:358px;background:#c0c0c8;"></div>
<div class="ab" style="left:1375px;top:210px;width:1px;height:358px;background:#c0c0c8;"></div>
<div class="ab" style="left:1474px;top:210px;width:1px;height:358px;background:#c0c0c8;"></div>
<div class="ab" style="left:1684px;top:210px;width:1px;height:358px;background:#c0c0c8;"></div>
<div class="ab" style="left:1895px;top:210px;width:1px;height:358px;background:#c0c0c8;"></div>
<svg class="ab" style="left:6px;top:215px" width="9" height="15" viewBox="0 0 9 15"><path d="M0 0 L8.5 7.5 L0 15Z" fill="#000"/></svg>
<div class="cell" style="left:17px;top:544px;width:586px;text-align:center"><span class="c">合　计</span></div>
<div class="cell" style="left:606px;top:544px;width:300px"><span class="a">26</span></div>
<div class="cell r" style="left:1474px;top:544px;width:207px"><span class="a">1153.04</span></div>
<div class="ab" style="left:1895px;top:184px;width:18px;height:385px;background:#f0f0f0;"></div>
<div class="ab" style="left:1897px;top:206px;width:16px;height:116px;background:#cdcdcd;"></div>
<svg class="ab" style="left:1900px;top:192px" width="12" height="9" viewBox="0 0 12 9"><path d="M1.5 7 L6 2.5 L10.5 7" fill="none" stroke="#606060" stroke-width="2"/></svg>
<svg class="ab" style="left:1900px;top:554px" width="12" height="9" viewBox="0 0 12 9"><path d="M1.5 2 L6 6.5 L10.5 2" fill="none" stroke="#606060" stroke-width="2"/></svg>
<div class="ab" style="left:1913px;top:182px;width:1px;height:387px;background:#a0a0a0;"></div>
<div class="ab" style="left:0px;top:577px;width:1920px;height:1px;background:#a0a0a0;"></div>
<div class="ab" style="left:1px;top:578px;width:1919px;height:2px;background:#696969;"></div>
<div class="ab" style="left:0px;top:577px;width:1px;height:398px;background:#a0a0a0;"></div>
<div class="ab" style="left:1px;top:578px;width:1px;height:397px;background:#696969;"></div>
<div class="ab" style="left:2px;top:580px;width:1915px;height:24px;background:#f0f0f0;"></div>
<div class="ab" style="left:2px;top:603px;width:1915px;height:1px;background:#a0a0a0;"></div>
<div class="ab" style="left:2px;top:604px;width:1916px;height:1px;background:#000;"></div>
<div class="ab" style="left:16px;top:580px;width:1px;height:25px;background:#000;"></div>
<div class="ab" style="left:2px;top:580px;width:14px;height:1px;background:#fff;"></div>
<div class="ab" style="left:2px;top:580px;width:1px;height:24px;background:#fff;"></div>
<div class="ab" style="left:223px;top:580px;width:1px;height:24px;background:#a0a0a0;"></div>
<div class="ab" style="left:224px;top:580px;width:1px;height:24px;background:#000;"></div>
<div class="ab" style="left:225px;top:580px;width:1px;height:23px;background:#fff;"></div>
<div class="cell" style="left:20px;top:580px;width:203px"><span class="c">住院号</span></div>
<div class="ab" style="left:414px;top:580px;width:1px;height:24px;background:#a0a0a0;"></div>
<div class="ab" style="left:415px;top:580px;width:1px;height:24px;background:#000;"></div>
<div class="ab" style="left:416px;top:580px;width:1px;height:23px;background:#fff;"></div>
<div class="cell" style="left:227px;top:580px;width:187px"><span class="c">床号</span></div>
<div class="ab" style="left:589px;top:580px;width:1px;height:24px;background:#a0a0a0;"></div>
<div class="ab" style="left:590px;top:580px;width:1px;height:24px;background:#000;"></div>
<div class="ab" style="left:591px;top:580px;width:1px;height:23px;background:#fff;"></div>
<div class="cell" style="left:418px;top:580px;width:171px"><span class="c">姓名</span></div>
<div class="ab" style="left:721px;top:580px;width:1px;height:24px;background:#a0a0a0;"></div>
<div class="ab" style="left:722px;top:580px;width:1px;height:24px;background:#000;"></div>
<div class="ab" style="left:723px;top:580px;width:1px;height:23px;background:#fff;"></div>
<div class="cell" style="left:593px;top:580px;width:128px"><span class="c">单剂量</span></div>
<div class="ab" style="left:813px;top:580px;width:1px;height:24px;background:#a0a0a0;"></div>
<div class="ab" style="left:814px;top:580px;width:1px;height:24px;background:#000;"></div>
<div class="ab" style="left:815px;top:580px;width:1px;height:23px;background:#fff;"></div>
<div class="cell" style="left:725px;top:580px;width:88px"><span class="c">频次</span></div>
<div class="ab" style="left:973px;top:580px;width:1px;height:24px;background:#a0a0a0;"></div>
<div class="ab" style="left:974px;top:580px;width:1px;height:24px;background:#000;"></div>
<div class="ab" style="left:975px;top:580px;width:1px;height:23px;background:#fff;"></div>
<div class="cell" style="left:817px;top:580px;width:156px"><span class="c">用药方法</span></div>
<div class="ab" style="left:1075px;top:580px;width:1px;height:24px;background:#a0a0a0;"></div>
<div class="ab" style="left:1076px;top:580px;width:1px;height:24px;background:#000;"></div>
<div class="ab" style="left:1077px;top:580px;width:1px;height:23px;background:#fff;"></div>
<div class="cell" style="left:977px;top:580px;width:98px"><span class="c">数量</span></div>
<div class="ab" style="left:1155px;top:580px;width:1px;height:24px;background:#a0a0a0;"></div>
<div class="ab" style="left:1156px;top:580px;width:1px;height:24px;background:#000;"></div>
<div class="ab" style="left:1157px;top:580px;width:1px;height:23px;background:#fff;"></div>
<div class="cell" style="left:1079px;top:580px;width:76px"><span class="c">单位</span></div>
<div class="ab" style="left:1304px;top:580px;width:1px;height:24px;background:#a0a0a0;"></div>
<div class="ab" style="left:1305px;top:580px;width:1px;height:24px;background:#000;"></div>
<div class="ab" style="left:1306px;top:580px;width:1px;height:23px;background:#fff;"></div>
<div class="cell" style="left:1159px;top:580px;width:145px"><span class="c">单价</span></div>
<div class="ab" style="left:1495px;top:580px;width:1px;height:24px;background:#a0a0a0;"></div>
<div class="ab" style="left:1496px;top:580px;width:1px;height:24px;background:#000;"></div>
<div class="ab" style="left:1497px;top:580px;width:1px;height:23px;background:#fff;"></div>
<div class="cell" style="left:1308px;top:580px;width:187px"><span class="c">金额</span></div>
<div class="ab" style="left:1608px;top:580px;width:1px;height:24px;background:#a0a0a0;"></div>
<div class="ab" style="left:1609px;top:580px;width:1px;height:24px;background:#000;"></div>
<div class="ab" style="left:1610px;top:580px;width:1px;height:23px;background:#fff;"></div>
<div class="cell" style="left:1499px;top:580px;width:109px"><span class="c">状态</span></div>
<div class="ab" style="left:1756px;top:580px;width:1px;height:24px;background:#a0a0a0;"></div>
<div class="ab" style="left:1757px;top:580px;width:1px;height:24px;background:#000;"></div>
<div class="ab" style="left:1758px;top:580px;width:1px;height:23px;background:#fff;"></div>
<div class="cell" style="left:1612px;top:580px;width:144px"><span class="c">首日次数</span></div>
<div class="ab" style="left:1916px;top:580px;width:1px;height:24px;background:#a0a0a0;"></div>
<div class="ab" style="left:1917px;top:580px;width:1px;height:24px;background:#000;"></div>
<div class="ab" style="left:1918px;top:580px;width:1px;height:23px;background:#fff;"></div>
<div class="cell" style="left:1760px;top:580px;width:156px"><span class="c">婴儿姓名</span></div>
<div class="ab" style="left:17px;top:605px;width:1900px;height:344px;background:#fff;"></div>
<div class="ab" style="left:17px;top:629px;width:1900px;height:1px;background:#d0d0d0;"></div>
<div class="ab" style="left:17px;top:949px;width:1900px;height:1px;background:#c8c8c8;"></div>
<div class="ab" style="left:17px;top:950px;width:1900px;height:24px;background:#ffffe1;"></div>
<div class="ab" style="left:2px;top:974px;width:1916px;height:1px;background:#a0a0a0;"></div>
<div class="ab" style="left:2px;top:605px;width:14px;height:369px;background:#fff;"></div>
<div class="ind" style="top:605px;height:24px"></div>
<div class="ab" style="left:2px;top:629px;width:15px;height:1px;background:#000;"></div>
<div class="ind" style="top:950px;height:24px"></div>
<div class="ab" style="left:2px;top:949px;width:15px;height:1px;background:#000;"></div>
<div class="ab" style="left:2px;top:974px;width:15px;height:1px;background:#000;"></div>
<div class="ab" style="left:16px;top:605px;width:1px;height:370px;background:#000;"></div>
<div class="ab" style="left:224px;top:605px;width:1px;height:369px;background:#d0d0d0;"></div>
<div class="ab" style="left:415px;top:605px;width:1px;height:369px;background:#d0d0d0;"></div>
<div class="ab" style="left:590px;top:605px;width:1px;height:369px;background:#d0d0d0;"></div>
<div class="ab" style="left:722px;top:605px;width:1px;height:369px;background:#d0d0d0;"></div>
<div class="ab" style="left:814px;top:605px;width:1px;height:369px;background:#d0d0d0;"></div>
<div class="ab" style="left:974px;top:605px;width:1px;height:369px;background:#d0d0d0;"></div>
<div class="ab" style="left:1076px;top:605px;width:1px;height:369px;background:#d0d0d0;"></div>
<div class="ab" style="left:1156px;top:605px;width:1px;height:369px;background:#d0d0d0;"></div>
<div class="ab" style="left:1305px;top:605px;width:1px;height:369px;background:#d0d0d0;"></div>
<div class="ab" style="left:1496px;top:605px;width:1px;height:369px;background:#d0d0d0;"></div>
<div class="ab" style="left:1609px;top:605px;width:1px;height:369px;background:#d0d0d0;"></div>
<div class="ab" style="left:1757px;top:605px;width:1px;height:369px;background:#d0d0d0;"></div>
<div class="ab" style="left:1917px;top:605px;width:1px;height:369px;background:#d0d0d0;"></div>
<svg class="ab" style="left:6px;top:610px" width="9" height="15" viewBox="0 0 9 15"><path d="M0 0 L8.5 7.5 L0 15Z" fill="#000"/></svg>
<div class="cell" style="left:20px;top:606px;width:203px"><span style="display:inline-block;width:9.8px;text-align:center;font-family:'Liberation Sans',sans-serif;font-size:17px;transform:scaleY(1.05)">2</span><span style="display:inline-block;width:9.8px;text-align:center;font-family:'Liberation Sans',sans-serif;font-size:17px;transform:scaleY(1.05)">5</span><span style="display:inline-block;width:9.8px;text-align:center;font-family:'Liberation Sans',sans-serif;font-size:17px;transform:scaleY(1.05)">0</span><span style="display:inline-block;width:9.8px;text-align:center;font-family:'Liberation Sans',sans-serif;font-size:17px;transform:scaleY(1.05)">0</span><span style="display:inline-block;width:9.8px;text-align:center;font-family:'Liberation Sans',sans-serif;font-size:17px;transform:scaleY(1.05)">7</span><span style="display:inline-block;width:9.8px;text-align:center;font-family:'Liberation Sans',sans-serif;font-size:17px;transform:scaleY(1.05)">2</span><span style="display:inline-block;width:9.8px;text-align:center;font-family:'Liberation Sans',sans-serif;font-size:17px;transform:scaleY(1.05)">6</span></div>
<div class="cell" style="left:227px;top:606px;width:187px"><span class="c">内</span><span class="c">科</span><span style="display:inline-block;width:9.8px;text-align:center;font-family:'Liberation Sans',sans-serif;font-size:17px;transform:scaleY(1.05)">2</span><span style="display:inline-block;width:9.8px;text-align:center;font-family:'Liberation Sans',sans-serif;font-size:17px;transform:scaleY(1.05)">-</span><span style="display:inline-block;width:9.8px;text-align:center;font-family:'Liberation Sans',sans-serif;font-size:17px;transform:scaleY(1.05)">1</span><span style="display:inline-block;width:9.8px;text-align:center;font-family:'Liberation Sans',sans-serif;font-size:17px;transform:scaleY(1.05)">0</span></div>
<div class="cell" style="left:418px;top:605px;width:170px"><span class="c">何笔逸</span></div>
<div class="cell" style="left:593px;top:605px;width:127px"><span class="a">2g</span></div>
<div class="cell" style="left:725px;top:605px;width:87px"><span class="a">t.i.d</span></div>
<div class="cell" style="left:817px;top:605px;width:155px"><span class="c">皮试阴性用静脉滴注</span></div>
<div class="cell r" style="left:974px;top:605px;width:99px"><span class="a">6</span></div>
<div class="cell" style="left:1079px;top:605px;width:75px"><span class="c">瓶</span></div>
<div class="cell r" style="left:1156px;top:605px;width:146px"><span class="a">15.3000</span></div>
<div class="cell r" style="left:1305px;top:605px;width:188px"><span class="a">91.80</span></div>
<div class="cell" style="left:1499px;top:605px;width:108px"><span class="c">正常</span></div>
<div class="cell" style="left:17px;top:950px;width:207px;text-align:center"><span class="c">合　计</span></div>
<div class="cell" style="left:418px;top:950px;width:100px"><span class="a">1</span></div>
<div class="cell r" style="left:975px;top:950px;width:99px"><span class="a">6</span></div>
<div class="cell r" style="left:1305px;top:950px;width:189px"><span class="a">91.80</span></div>
<div class="ab" style="left:1px;top:979px;width:1919px;height:1px;background:#a0a0a0;"></div>
<div class="ab" style="left:1px;top:979px;width:1px;height:25px;background:#a0a0a0;"></div>
<div class="ab" style="left:2px;top:980px;width:1918px;height:1px;background:#fff;"></div>
<div class="ui" style="left:12px;top:981px">病区发药信息</div>
<div class="ab" style="left:115px;top:981px;width:1px;height:22px;background:#a0a0a0;"></div>
<div class="ab" style="left:116px;top:981px;width:1px;height:22px;background:#fff;"></div>
<div class="ab" style="left:123px;top:980px;width:312px;height:23px;background:#f4f4f4;border-top:2px solid #a0a0a0;border-left:2px solid #a0a0a0;border-right:1px solid #fff;border-bottom:1px solid #fff"></div>
<div class="ui" style="left:130px;top:982px;letter-spacing:0.28px">病区针剂发药(全部)一内科2病区（呼吸与危</div>
<div class="ab" style="left:442px;top:981px;width:1px;height:22px;background:#a0a0a0;"></div>
<div class="ab" style="left:443px;top:981px;width:1px;height:22px;background:#fff;"></div>
<div class="ab" style="left:0px;top:1004px;width:1920px;height:1px;background:#fff;"></div>
<div class="ab" style="left:0px;top:1005px;width:1920px;height:1px;background:#a0a0a0;"></div>
<div class="ab" style="left:0px;top:1008px;width:174px;height:21px;background:#f0f0f0;border-top:1px solid #a0a0a0;border-left:1px solid #a0a0a0;border-right:1px solid #fff;border-bottom:1px solid #fff"></div>
<div class="ui" style="left:3px;top:1009px;width:170px;overflow:hidden;letter-spacing:0">管理员(1)</div>
<div class="ab" style="left:176px;top:1008px;width:123px;height:21px;background:#f0f0f0;border-top:1px solid #a0a0a0;border-left:1px solid #a0a0a0;border-right:1px solid #fff;border-bottom:1px solid #fff"></div>
<div class="ui" style="left:179px;top:1009px;width:119px;overflow:hidden;letter-spacing:0">住院药房</div>
<div class="ab" style="left:302px;top:1008px;width:247px;height:21px;background:#f0f0f0;border-top:1px solid #a0a0a0;border-left:1px solid #a0a0a0;border-right:1px solid #fff;border-bottom:1px solid #fff"></div>
<div class="ui" style="left:305px;top:1009px;width:243px;overflow:hidden;letter-spacing:0">在"状态"栏可进行退回处理,Ctrl+鼠标</div>
<div class="ab" style="left:552px;top:1008px;width:372px;height:21px;background:#f0f0f0;border-top:1px solid #a0a0a0;border-left:1px solid #a0a0a0;border-right:1px solid #fff;border-bottom:1px solid #fff"></div>
<div class="ui" style="left:555px;top:1009px;width:368px;overflow:hidden;letter-spacing:0.27px">福建省漳州市漳浦县中医院(H35062301739)</div>
<div class="ab" style="left:927px;top:1008px;width:988px;height:21px;background:#f0f0f0;border-top:1px solid #a0a0a0;border-left:1px solid #a0a0a0;border-right:1px solid #fff;border-bottom:1px solid #fff"></div>
<div class="ui" style="left:930px;top:1009px;width:984px;overflow:hidden;letter-spacing:0.4px">2025.01.24 11:25:12</div>
<div class="ab" style="left:0px;top:1030px;width:1920px;height:10px;background:#353535;"></div>
<div class="ab" style="left:806px;top:1030px;width:61px;height:10px;background:#4a4a4a;"></div>
<div class="ab" style="left:1914px;top:1030px;width:1px;height:10px;background:#6a6a6a;"></div>
<div class="ui" style="left:1788px;top:1034px;color:#fff;font-size:13px">11:25</div>
<div class="ab" style="left:1462px;top:152px;width:455px;height:430px;border:4px solid #ff1c12;border-radius:5px"></div>
<div class="ab" style="left:1680px;top:831px;width:225px;height:82px">
<svg width="225" height="82" viewBox="0 0 225 82" style="position:absolute;left:0;top:0;overflow:visible">
<defs>
<linearGradient id="wg" x1="0" y1="0" x2="1" y2="1"><stop offset="0" stop-color="#fdd88a"/><stop offset="0.45" stop-color="#fde4cf"/><stop offset="1" stop-color="#fde7df"/></linearGradient>
<radialGradient id="cg" cx="50%" cy="30%" r="70%"><stop offset="0" stop-color="#fbfbf6"/><stop offset="0.6" stop-color="#f1eedc"/><stop offset="1" stop-color="#f0cf88"/></radialGradient>
</defs>
<rect x="60" y="2" width="163" height="79" rx="22" fill="url(#wg)"/>
<rect x="87" y="44" width="129" height="31" rx="15.5" fill="#fdf2ec" opacity="0.85"/>
<circle cx="39" cy="42" r="44" fill="#fdf4dc" opacity="0.55"/>
<circle cx="39" cy="42" r="38" fill="#fffaea"/>
<circle cx="39" cy="42" r="33" fill="url(#cg)"/><circle cx="39" cy="42" r="33.5" fill="none" stroke="#fde7a8" stroke-width="3"/>
<path d="M39 8.5 A33.5 33.5 0 1 1 36.5 75.4" fill="none" stroke="#f9bf2a" stroke-width="3.6" stroke-linecap="round"/>
</svg>
<div class="ab" style="left:18px;top:27px;font-family:'Liberation Sans',sans-serif;font-weight:bold;font-size:24px;color:#333;line-height:30px">86<span style="font-size:16px;font-weight:normal">%</span></div>
<svg class="ab" style="left:97px;top:10px" width="26" height="26" viewBox="0 0 26 26">
<path d="M4.5 8 V17 M4.5 8 L12.5 12.5 L20.5 17 M20.5 8 V17 M12.5 3 V6 M12.5 20 V23" stroke="#1a5af0" stroke-width="2.2" fill="none"/>
<circle cx="4.5" cy="8" r="2.4" fill="#1a5af0"/><circle cx="4.5" cy="17" r="2.4" fill="#1a5af0"/><circle cx="20.5" cy="8" r="2.4" fill="#1a5af0"/><circle cx="20.5" cy="17" r="2.4" fill="#1a5af0"/><circle cx="12.5" cy="12.5" r="2" fill="#1a5af0"/>
<circle cx="12.5" cy="3.5" r="2.2" fill="#000"/><circle cx="12.5" cy="22.5" r="2.2" fill="#000"/>
</svg>
<div class="ab" style="left:127px;top:12px;font-family:'Liberation Sans',sans-serif;font-weight:bold;font-size:15px;color:#222;line-height:20px;white-space:nowrap">纳米AI助手</div>
<svg class="ab" style="left:96px;top:53px" width="10" height="12" viewBox="0 0 10 12"><path d="M5 11 V2 M1.5 5 L5 1.5 L8.5 5" fill="none" stroke="#3a90f0" stroke-width="1.6"/></svg>
<div class="ab" style="left:109px;top:52px;font-family:'Liberation Sans',sans-serif;font-size:10.5px;color:#222;line-height:14px;white-space:nowrap">0.3K/s</div>
<svg class="ab" style="left:157px;top:53px" width="10" height="12" viewBox="0 0 10 12"><path d="M5 1 V10 M1.5 7 L5 10.5 L8.5 7" fill="none" stroke="#20b040" stroke-width="1.6"/></svg>
<div class="ab" style="left:170px;top:52px;font-family:'Liberation Sans',sans-serif;font-size:10.5px;color:#222;line-height:14px;white-space:nowrap">0.2K/s</div>
</div>
</body></html>
